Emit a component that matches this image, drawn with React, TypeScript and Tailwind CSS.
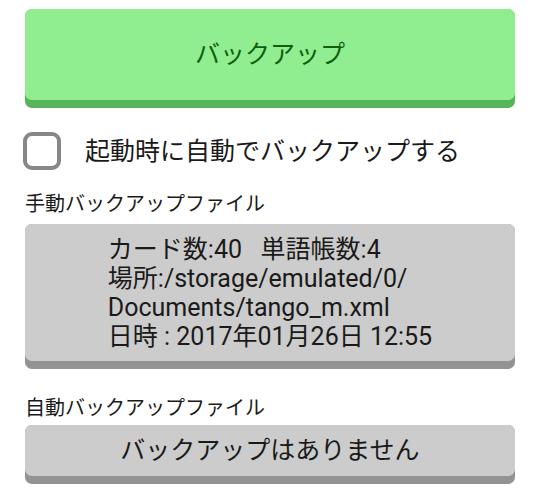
import React from "react";

const font = { fontFamily: 'Roboto, "Noto Sans CJK JP", sans-serif' };

export default function App() {
  return (
    <div className="w-[540px] h-[496px] bg-white px-[25px] pt-[9px] text-[#1a1a1a]" style={font}>
      <div className="rounded-[7px] bg-[#58b458] pb-[8px]">
        <div className="h-[91px] rounded-[7px] bg-[#90ee90] flex items-center justify-center text-[25px] text-[#0f5f0f]">
          バックアップ
        </div>
      </div>

      <div className="mt-[24px] flex items-center h-[38px]">
        <div className="w-[38px] h-[38px] rounded-[9px] border-[4px] border-[#878787] bg-white shrink-0 -ml-[2px]" />
        <div className="ml-[24px] text-[25px] leading-none">起動時に自動でバックアップする</div>
      </div>

      <div className="mt-[21px] text-[20px] leading-[26px]">手動バックアップファイル</div>

      <div className="mt-[7px] rounded-[7px] bg-[#939393] pb-[8px]">
        <div className="h-[137px] rounded-[7px] bg-[#cccccc] flex items-center justify-center">
          <div className="text-[25px] leading-[29px]">
            <div>カード数:40&nbsp;&nbsp;&nbsp;単語帳数:4</div>
            <div>場所:/storage/emulated/0/</div>
            <div>Documents/tango_m.xml</div>
            <div>日時 : 2017年01月26日 12:55</div>
          </div>
        </div>
      </div>

      <div className="mt-[26px] text-[20px] leading-[26px]">自動バックアップファイル</div>

      <div className="mt-[4px] rounded-[7px] bg-[#939393] pb-[8px]">
        <div className="h-[51px] rounded-[7px] bg-[#cccccc] flex items-center justify-center text-[25px]">
          バックアップはありません
        </div>
      </div>
    </div>
  );
}
